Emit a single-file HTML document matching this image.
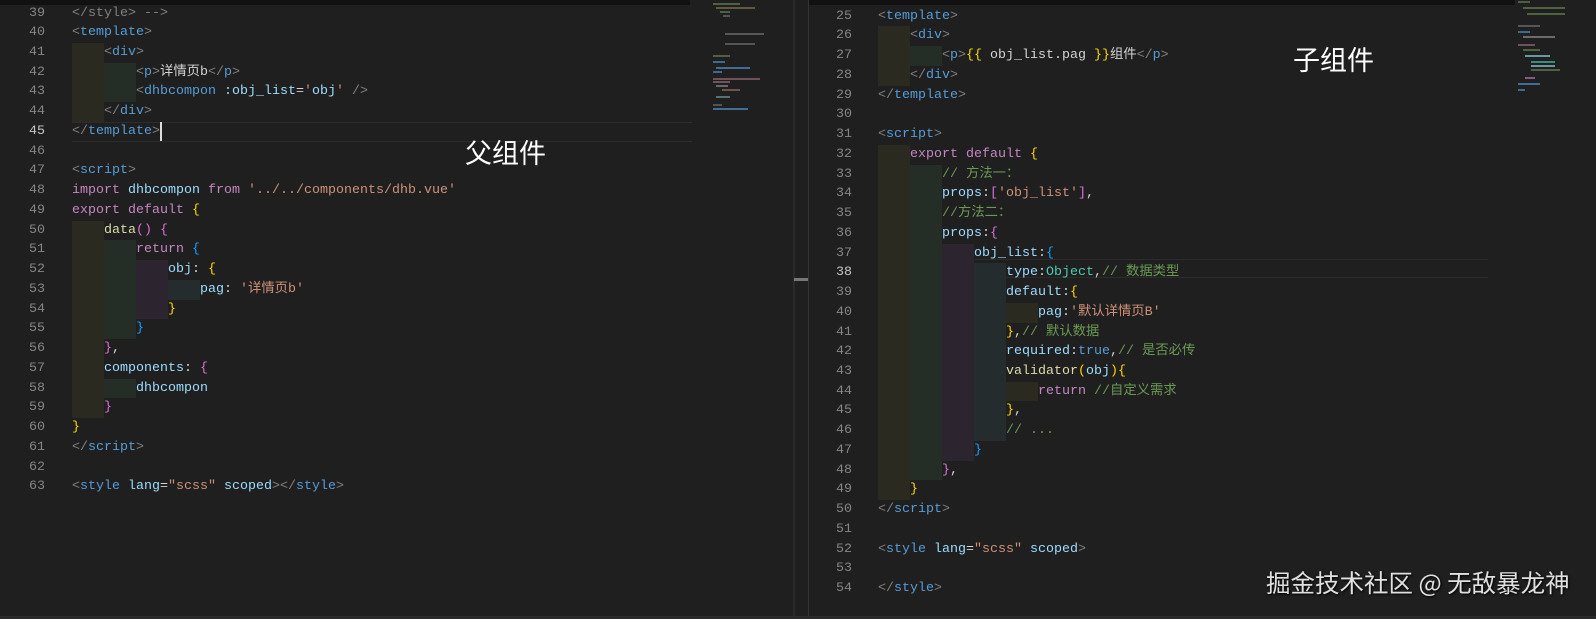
<!DOCTYPE html>
<html><head><meta charset="utf-8"><style>
*{margin:0;padding:0;box-sizing:border-box}
body{width:1596px;height:619px;background:#1f1f1f;position:relative;overflow:hidden;font-family:"Liberation Mono","Noto Sans CJK SC",monospace;font-size:13.33px;color:#d4d4d4}
.l{position:absolute;height:19.74px;line-height:19.74px;white-space:pre}
.n{position:absolute;width:40px;text-align:right;height:19.74px;line-height:19.74px;color:#858585}
i{display:inline-block;width:32px;height:19.74px;vertical-align:top;font-style:normal}
.a{background:#2a2a20}.b{background:#252d27}.c{background:#2c2530}.d{background:#242c2e}.e{background:transparent}
.g{color:#808080}.t{color:#569cd6}.at{color:#9cdcfe}.s{color:#ce9178}.k{color:#c586c0}.f{color:#dcdcaa}.y{color:#ffd700}.p{color:#da70d6}.bl{color:#179fff}.cm{color:#6a9955}.v{color:#9cdcfe}.ty{color:#4ec9b0}
.lab{position:absolute;font-family:"Noto Sans CJK SC",sans-serif;color:#fff;font-size:27px;line-height:1}
</style></head><body>
<div style="position:absolute;left:0;top:0;width:690px;height:5px;background:#111"></div>
<div style="position:absolute;left:808px;top:0;width:707px;height:5px;background:#111"></div>
<div style="position:absolute;left:793px;top:0;width:2px;height:619px;background:#2b2b2b"></div>
<div style="position:absolute;left:808px;top:0;width:1px;height:619px;background:#333"></div>
<div style="position:absolute;left:0;top:616px;width:1596px;height:3px;background:#2a2a2a"></div>
<div style="position:absolute;left:794px;top:278px;width:14px;height:3px;background:#777"></div>
<!-- current line left -->
<div style="position:absolute;left:72px;top:121.9px;width:620px;height:19.74px;border-top:1px solid #2c2c2c;border-bottom:1px solid #2c2c2c"></div>
<!-- current line right -->
<div style="position:absolute;left:878px;top:258.5px;width:610px;height:19.74px;border-top:1px solid #2c2c2c;border-bottom:1px solid #2c2c2c"></div>

<!-- LEFT -->
<div style="position:absolute;left:5px;top:3.5px">
<div class="n" style="top:0">39</div><div class="n" style="top:19.74px">40</div><div class="n" style="top:39.48px">41</div><div class="n" style="top:59.22px">42</div><div class="n" style="top:78.96px">43</div><div class="n" style="top:98.7px">44</div><div class="n" style="top:118.44px;color:#c6c6c6">45</div><div class="n" style="top:138.18px">46</div><div class="n" style="top:157.92px">47</div><div class="n" style="top:177.66px">48</div><div class="n" style="top:197.4px">49</div><div class="n" style="top:217.14px">50</div><div class="n" style="top:236.88px">51</div><div class="n" style="top:256.62px">52</div><div class="n" style="top:276.36px">53</div><div class="n" style="top:296.1px">54</div><div class="n" style="top:315.84px">55</div><div class="n" style="top:335.58px">56</div><div class="n" style="top:355.32px">57</div><div class="n" style="top:375.06px">58</div><div class="n" style="top:394.8px">59</div><div class="n" style="top:414.54px">60</div><div class="n" style="top:434.28px">61</div><div class="n" style="top:454.02px">62</div><div class="n" style="top:473.76px">63</div>
</div>
<div style="position:absolute;left:72px;top:3.5px">
<div class="l" style="top:0"><span class="g">&lt;/</span><span class="g">style&gt; --&gt;</span></div>
<div class="l" style="top:19.74px"><span class="g">&lt;</span><span class="t">template</span><span class="g">&gt;</span></div>
<div class="l" style="top:39.48px"><i class="a"></i><span class="g">&lt;</span><span class="t">div</span><span class="g">&gt;</span></div>
<div class="l" style="top:59.22px"><i class="a"></i><i class="b"></i><span class="g">&lt;</span><span class="t">p</span><span class="g">&gt;</span>详情页b<span class="g">&lt;/</span><span class="t">p</span><span class="g">&gt;</span></div>
<div class="l" style="top:78.96px"><i class="a"></i><i class="b"></i><span class="g">&lt;</span><span class="t">dhbcompon</span> <span class="at">:obj_list</span>=<span class="s">'</span><span class="at">obj</span><span class="s">'</span> <span class="g">/&gt;</span></div>
<div class="l" style="top:98.7px"><i class="a"></i><span class="g">&lt;/</span><span class="t">div</span><span class="g">&gt;</span></div>
<div class="l" style="top:118.44px"><span class="g">&lt;/</span><span class="t">template</span><span class="g">&gt;</span><span style="display:inline-block;width:2px;height:19px;background:#ddd;vertical-align:top"></span></div>
<div class="l" style="top:157.92px"><span class="g">&lt;</span><span class="t">script</span><span class="g">&gt;</span></div>
<div class="l" style="top:177.66px"><span class="k">import</span> <span class="v">dhbcompon</span> <span class="k">from</span> <span class="s">'../../components/dhb.vue'</span></div>
<div class="l" style="top:197.4px"><span class="k">export default</span> <span class="y">{</span></div>
<div class="l" style="top:217.14px"><i class="a"></i><span class="f">data</span><span class="p">()</span> <span class="p">{</span></div>
<div class="l" style="top:236.88px"><i class="a"></i><i class="b"></i><span class="k">return</span> <span class="bl">{</span></div>
<div class="l" style="top:256.62px"><i class="a"></i><i class="b"></i><i class="c"></i><span class="v">obj</span>: <span class="y">{</span></div>
<div class="l" style="top:276.36px"><i class="a"></i><i class="b"></i><i class="c"></i><i class="d"></i><span class="v">pag</span>: <span class="s">'详情页b'</span></div>
<div class="l" style="top:296.1px"><i class="a"></i><i class="b"></i><i class="c"></i><span class="y">}</span></div>
<div class="l" style="top:315.84px"><i class="a"></i><i class="b"></i><span class="bl">}</span></div>
<div class="l" style="top:335.58px"><i class="a"></i><span class="p">}</span>,</div>
<div class="l" style="top:355.32px"><i class="a"></i><span class="v">components</span>: <span class="p">{</span></div>
<div class="l" style="top:375.06px"><i class="a"></i><i class="b"></i><span class="v">dhbcompon</span></div>
<div class="l" style="top:394.8px"><i class="a"></i><span class="p">}</span></div>
<div class="l" style="top:414.54px"><span class="y">}</span></div>
<div class="l" style="top:434.28px"><span class="g">&lt;/</span><span class="t">script</span><span class="g">&gt;</span></div>
<div class="l" style="top:473.76px"><span class="g">&lt;</span><span class="t">style</span> <span class="at">lang</span>=<span class="s">"scss"</span> <span class="at">scoped</span><span class="g">&gt;&lt;/</span><span class="t">style</span><span class="g">&gt;</span></div>
</div>

<!-- RIGHT -->
<div style="position:absolute;left:812px;top:6.7px">
<div class="n" style="top:0">25</div><div class="n" style="top:19.74px">26</div><div class="n" style="top:39.48px">27</div><div class="n" style="top:59.22px">28</div><div class="n" style="top:78.96px">29</div><div class="n" style="top:98.7px">30</div><div class="n" style="top:118.44px">31</div><div class="n" style="top:138.18px">32</div><div class="n" style="top:157.92px">33</div><div class="n" style="top:177.66px">34</div><div class="n" style="top:197.4px">35</div><div class="n" style="top:217.14px">36</div><div class="n" style="top:236.88px">37</div><div class="n" style="top:256.62px;color:#c6c6c6">38</div><div class="n" style="top:276.36px">39</div><div class="n" style="top:296.1px">40</div><div class="n" style="top:315.84px">41</div><div class="n" style="top:335.58px">42</div><div class="n" style="top:355.32px">43</div><div class="n" style="top:375.06px">44</div><div class="n" style="top:394.8px">45</div><div class="n" style="top:414.54px">46</div><div class="n" style="top:434.28px">47</div><div class="n" style="top:454.02px">48</div><div class="n" style="top:473.76px">49</div><div class="n" style="top:493.5px">50</div><div class="n" style="top:513.24px">51</div><div class="n" style="top:532.98px">52</div><div class="n" style="top:552.72px">53</div><div class="n" style="top:572.46px">54</div>
</div>
<div style="position:absolute;left:878px;top:6.7px">
<div class="l" style="top:0"><span class="g">&lt;</span><span class="t">template</span><span class="g">&gt;</span></div>
<div class="l" style="top:19.74px"><i class="a"></i><span class="g">&lt;</span><span class="t">div</span><span class="g">&gt;</span></div>
<div class="l" style="top:39.48px"><i class="a"></i><i class="b"></i><span class="g">&lt;</span><span class="t">p</span><span class="g">&gt;</span><span class="y">{{</span> obj_list.pag <span class="y">}}</span>组件<span class="g">&lt;/</span><span class="t">p</span><span class="g">&gt;</span></div>
<div class="l" style="top:59.22px"><i class="a"></i><span class="g">&lt;/</span><span class="t">div</span><span class="g">&gt;</span></div>
<div class="l" style="top:78.96px"><span class="g">&lt;/</span><span class="t">template</span><span class="g">&gt;</span></div>
<div class="l" style="top:118.44px"><span class="g">&lt;</span><span class="t">script</span><span class="g">&gt;</span></div>
<div class="l" style="top:138.18px"><i class="a"></i><span class="k">export default</span> <span class="y">{</span></div>
<div class="l" style="top:157.92px"><i class="a"></i><i class="b"></i><span class="cm">// 方法一：</span></div>
<div class="l" style="top:177.66px"><i class="a"></i><i class="b"></i><span class="v">props</span>:<span class="p">[</span><span class="s">'obj_list'</span><span class="p">]</span>,</div>
<div class="l" style="top:197.4px"><i class="a"></i><i class="b"></i><span class="cm">//方法二：</span></div>
<div class="l" style="top:217.14px"><i class="a"></i><i class="b"></i><span class="v">props</span>:<span class="p">{</span></div>
<div class="l" style="top:236.88px"><i class="a"></i><i class="b"></i><i class="c"></i><span class="v">obj_list</span>:<span class="bl">{</span></div>
<div class="l" style="top:256.62px"><i class="a"></i><i class="b"></i><i class="c"></i><i class="d"></i><span class="v">type</span>:<span class="ty">Object</span>,<span class="cm">// 数据类型</span></div>
<div class="l" style="top:276.36px"><i class="a"></i><i class="b"></i><i class="c"></i><i class="d"></i><span class="v">default</span>:<span class="y">{</span></div>
<div class="l" style="top:296.1px"><i class="a"></i><i class="b"></i><i class="c"></i><i class="d"></i><i class="a"></i><span class="v">pag</span>:<span class="s">'默认详情页B'</span></div>
<div class="l" style="top:315.84px"><i class="a"></i><i class="b"></i><i class="c"></i><i class="d"></i><span class="y">}</span>,<span class="cm">// 默认数据</span></div>
<div class="l" style="top:335.58px"><i class="a"></i><i class="b"></i><i class="c"></i><i class="d"></i><span class="v">required</span>:<span class="t">true</span>,<span class="cm">// 是否必传</span></div>
<div class="l" style="top:355.32px"><i class="a"></i><i class="b"></i><i class="c"></i><i class="d"></i><span class="f">validator</span><span class="y">(</span><span class="v">obj</span><span class="y">){</span></div>
<div class="l" style="top:375.06px"><i class="a"></i><i class="b"></i><i class="c"></i><i class="d"></i><i class="a"></i><span class="k">return</span> <span class="cm">//自定义需求</span></div>
<div class="l" style="top:394.8px"><i class="a"></i><i class="b"></i><i class="c"></i><i class="d"></i><span class="y">}</span>,</div>
<div class="l" style="top:414.54px"><i class="a"></i><i class="b"></i><i class="c"></i><i class="d"></i><span class="cm">// ...</span></div>
<div class="l" style="top:434.28px"><i class="a"></i><i class="b"></i><i class="c"></i><span class="bl">}</span></div>
<div class="l" style="top:454.02px"><i class="a"></i><i class="b"></i><span class="p">}</span>,</div>
<div class="l" style="top:473.76px"><i class="a"></i><span class="y">}</span></div>
<div class="l" style="top:493.5px"><span class="g">&lt;/</span><span class="t">script</span><span class="g">&gt;</span></div>
<div class="l" style="top:532.98px"><span class="g">&lt;</span><span class="t">style</span> <span class="at">lang</span>=<span class="s">"scss"</span> <span class="at">scoped</span><span class="g">&gt;</span></div>
<div class="l" style="top:572.46px"><span class="g">&lt;/</span><span class="t">style</span><span class="g">&gt;</span></div>
</div>

<!-- minimaps -->
<svg style="position:absolute;left:700px;top:0" width="90" height="120">
<g stroke-width="1.2">
<line x1="13" y1="4" x2="40" y2="4" stroke="#6a8a55"/><line x1="16" y1="8" x2="55" y2="8" stroke="#8a7a55"/><line x1="20" y1="12" x2="30" y2="12" stroke="#6a8a55"/><line x1="23" y1="16" x2="30" y2="16" stroke="#777"/><line x1="25" y1="34" x2="64" y2="34" stroke="#777"/><line x1="25" y1="44" x2="55" y2="44" stroke="#777"/><line x1="13" y1="56" x2="30" y2="56" stroke="#6a8a55"/><line x1="13" y1="62" x2="25" y2="62" stroke="#569cd6"/><line x1="16" y1="68" x2="50" y2="68" stroke="#569cd6"/><line x1="13" y1="72" x2="22" y2="72" stroke="#569cd6"/><line x1="13" y1="79" x2="60" y2="79" stroke="#a07080"/><line x1="13" y1="82" x2="30" y2="82" stroke="#a07080"/><line x1="16" y1="86" x2="28" y2="86" stroke="#999"/><line x1="22" y1="90" x2="40" y2="90" stroke="#a07060"/><line x1="16" y1="97" x2="30" y2="97" stroke="#7aa"/><line x1="13" y1="105" x2="22" y2="105" stroke="#777"/><line x1="13" y1="109" x2="48" y2="109" stroke="#569cd6"/>
</g></svg>
<svg style="position:absolute;left:1515px;top:0" width="70" height="95">
<g stroke-width="1.2">
<line x1="3" y1="2" x2="15" y2="2" stroke="#6a8a55"/><line x1="8" y1="8" x2="50" y2="8" stroke="#6a8a55"/><line x1="12" y1="14" x2="50" y2="14" stroke="#6a8a55"/><line x1="3" y1="26" x2="25" y2="26" stroke="#777"/><line x1="3" y1="32" x2="15" y2="32" stroke="#569cd6"/><line x1="8" y1="37" x2="40" y2="37" stroke="#999"/><line x1="3" y1="45" x2="20" y2="45" stroke="#a07080"/><line x1="8" y1="50" x2="25" y2="50" stroke="#6a8a55"/><line x1="10" y1="56" x2="35" y2="56" stroke="#9cdcfe"/><line x1="16" y1="62" x2="40" y2="62" stroke="#4ec9b0"/><line x1="16" y1="66" x2="40" y2="66" stroke="#9cdcfe"/><line x1="16" y1="70" x2="45" y2="70" stroke="#6a8a55"/><line x1="10" y1="78" x2="20" y2="78" stroke="#c586c0"/><line x1="3" y1="84" x2="25" y2="84" stroke="#569cd6"/><line x1="3" y1="90" x2="10" y2="90" stroke="#569cd6"/>
</g></svg>

<div class="lab" style="left:465px;top:138px">父组件</div>
<div class="lab" style="left:1293px;top:45px">子组件</div>
<div class="lab" style="left:1266px;top:571px;font-size:24.5px;color:#e0e0e0;text-shadow:1px 1px 2px #000">掘金技术社区 @ 无敌暴龙神</div>
</body></html>
